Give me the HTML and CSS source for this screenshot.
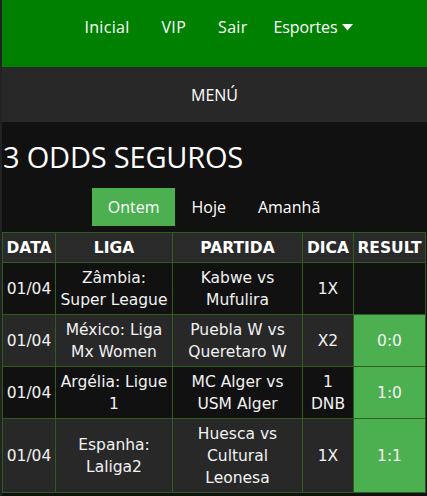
FILE: index.html
```html
<!DOCTYPE html>
<html lang="pt">
<head>
<meta charset="utf-8">
<link rel="stylesheet" href="styles.css">
</head>
<body>
<div class="page">
  <nav class="topnav">
    <a class="nav-link">Inicial</a>
    <a class="nav-link">VIP</a>
    <a class="nav-link">Sair</a>
    <a class="nav-link dropdown">Esportes <svg class="caret" width="11" height="7" viewBox="0 0 11 7"><path d="M0 0 H11 L5.5 6.5 Z" fill="#fff"/></svg></a>
  </nav>
  <div class="menubar">MENÚ</div>
  <main class="content">
    <h1 class="title">3 ODDS SEGUROS</h1>
    <div class="tabs">
      <span class="tab active">Ontem</span>
      <span class="tab">Hoje</span>
      <span class="tab">Amanhã</span>
    </div>
    <table class="odds">
      <thead>
        <tr><th class="c-data">DATA</th><th class="c-liga">LIGA</th><th class="c-partida">PARTIDA</th><th class="c-dica">DICA</th><th class="c-result">RESULT</th></tr>
      </thead>
      <tbody>
        <tr><td>01/04</td><td>Zâmbia:<br>Super League</td><td>Kabwe vs<br>Mufulira</td><td>1X</td><td></td></tr>
        <tr><td>01/04</td><td>México: Liga<br>Mx Women</td><td>Puebla W vs<br>Queretaro W</td><td>X2</td><td class="win">0:0</td></tr>
        <tr><td>01/04</td><td>Argélia: Ligue<br>1</td><td>MC Alger vs<br>USM Alger</td><td>1<br>DNB</td><td class="win">1:0</td></tr>
        <tr><td>01/04</td><td>Espanha:<br>Laliga2</td><td>Huesca vs<br>Cultural<br>Leonesa</td><td>1X</td><td class="win">1:1</td></tr>
      </tbody>
    </table>
  </main>
</div>
</body>
</html>
```
FILE: styles.css
```css
html, body {
  margin: 0;
  padding: 0;
  background: #222;
}
.page {
  margin-left: 2px;
  min-height: 496px;
  background: #111;
  font-family: "Open Sans", "DejaVu Sans", sans-serif;
  color: #fff;
}
.topnav {
  height: 67px;
  background: #008000;
  display: flex;
  justify-content: center;
  align-items: center;
  padding: 0 0 14px 2px;
  box-sizing: border-box;
}
.nav-link {
  color: #fff;
  font-size: 16px;
  padding: 0 16px;
  display: flex;
  align-items: center;
  gap: 4px;
  letter-spacing: 0.3px;
}
.nav-link.dropdown {
  padding: 0 10px;
  letter-spacing: -0.1px;
}
.caret {
  margin-top: 2px;
}
.menubar {
  height: 55px;
  background: #282828;
  display: flex;
  align-items: center;
  justify-content: center;
  font-size: 16px;
}
.content {
  padding: 0 1px 0 0;
}
.title {
  margin: 0;
  padding: 17px 0 0 1px;
  font-weight: normal;
  font-size: 29px;
  line-height: 36px;
  height: 49px;
  letter-spacing: -0.2px;
}
.tabs {
  display: flex;
  justify-content: center;
}
.tab {
  font-size: 16px;
  line-height: 38px;
  padding: 0 16px;
}
.tab.active {
  background: #4caf50;
}
.odds {
  margin-top: 6px;
  width: 100%;
  border-collapse: collapse;
  font-family: "DejaVu Sans", sans-serif;
  font-size: 15.5px;
  border: 1px solid #2e5d1e;
  color: #f2f2f2;
}
.odds th, .odds td {
  border: 1px solid #2e5d1e;
  text-align: center;
  line-height: 22px;
  padding: 4px 1px 3px;
  white-space: nowrap;
}
.odds th {
  background: #2a2a2a;
  font-weight: bold;
  color: #fff;
}
.c-data { width: 50px; }
.c-liga { width: 114px; }
.c-partida { width: 127px; }
.c-dica { width: 48px; }
.odds tbody tr:nth-child(odd) td { background: #111; }
.odds tbody tr:nth-child(even) td { background: #282828; }
.odds tbody tr td.win { background: #4caf50; }
```
